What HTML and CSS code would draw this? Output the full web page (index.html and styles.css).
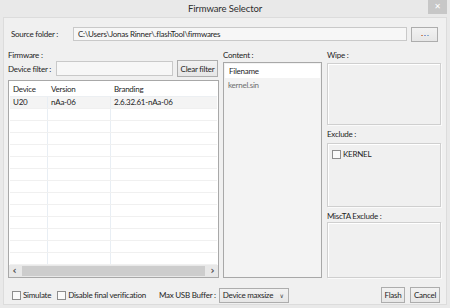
FILE: index.html
```html
<!DOCTYPE html>
<html>
<head>
<meta charset="utf-8">
<link rel="stylesheet" href="styles.css">
</head>
<body>
<div class="window">
  <div class="titlebar">
    <span></span>
    <span class="title">Firmware Selector</span>
    <span class="close">&#x2715;</span>
  </div>
  <div class="client">
    <div class="source-row">
      <span class="source-label">Source folder :</span>
      <div class="field source-field">C:\Users\Jonas Rinner\.flashTool\firmwares</div>
      <button class="btn dots"><span class="d1"></span><span class="d2"></span><span class="d3"></span></button>
    </div>
    <div class="main">
      <div class="col left">
        <div class="label">Firmware :</div>
        <div class="filter-row">
          <span class="filter-label">Device filter :</span>
          <div class="field filter-field"></div>
          <button class="btn clear">Clear filter</button>
        </div>
        <div class="table">
          <div class="thead">
            <span class="c1">Device</span><span class="c2">Version</span><span class="c3">Branding</span>
          </div>
          <div class="tbody">
            <div class="tr sel"><span class="c1">U20</span><span class="c2">nAa-06</span><span class="c3">2.6.32.61-nAa-06</span></div>
            <div class="tr"><span class="c1"></span><span class="c2"></span><span class="c3"></span></div>
            <div class="tr"><span class="c1"></span><span class="c2"></span><span class="c3"></span></div>
            <div class="tr"><span class="c1"></span><span class="c2"></span><span class="c3"></span></div>
            <div class="tr"><span class="c1"></span><span class="c2"></span><span class="c3"></span></div>
            <div class="tr"><span class="c1"></span><span class="c2"></span><span class="c3"></span></div>
            <div class="tr"><span class="c1"></span><span class="c2"></span><span class="c3"></span></div>
            <div class="tr"><span class="c1"></span><span class="c2"></span><span class="c3"></span></div>
            <div class="tr"><span class="c1"></span><span class="c2"></span><span class="c3"></span></div>
            <div class="tr"><span class="c1"></span><span class="c2"></span><span class="c3"></span></div>
            <div class="tr"><span class="c1"></span><span class="c2"></span><span class="c3"></span></div>
            <div class="tr"><span class="c1"></span><span class="c2"></span><span class="c3"></span></div>
            <div class="tr"><span class="c1"></span><span class="c2"></span><span class="c3"></span></div>
            <div class="tr"><span class="c1"></span><span class="c2"></span><span class="c3"></span></div>
          </div>
          <div class="hscroll">
            <span class="arrow">&#x2039;</span>
            <span class="thumb"></span>
            <span class="arrow">&#x203A;</span>
          </div>
        </div>
      </div>
      <div class="col middle">
        <div class="label">Content :</div>
        <div class="list">
          <div class="list-head">Filename</div>
          <div class="list-item">kernel.sin</div>
        </div>
      </div>
      <div class="col right">
        <div class="label">Wipe :</div>
        <div class="box wipe"></div>
        <div class="label">Exclude :</div>
        <div class="box exclude">
          <div class="check-item"><span class="checkbox"></span>KERNEL</div>
        </div>
        <div class="label">MiscTA Exclude :</div>
        <div class="box misc"></div>
      </div>
    </div>
    <div class="bottom">
      <div class="check-item simulate"><span class="checkbox"></span>Simulate</div>
      <div class="check-item disable"><span class="checkbox"></span>Disable final verification</div>
      <span class="usb-label">Max USB Buffer :</span>
      <div class="select"><span>Device maxsize</span><span class="chev">&#x2228;</span></div>
      <span class="spacer"></span>
      <button class="btn flash">Flash</button>
      <button class="btn cancel">Cancel</button>
    </div>
  </div>
</div>
</body>
</html>
```

FILE: styles.css
```css
* { box-sizing: border-box; }
html, body { margin: 0; padding: 0; }
body {
  width: 450px;
  height: 308px;
  overflow: hidden;
  font-family: Lato, "Liberation Sans", sans-serif;
  font-size: 8px;
  letter-spacing: -0.25px;
  white-space: nowrap;
  color: #1e1e1e;
  background: #e9e9e9;
}
.window {
  width: 450px;
  height: 308px;
  display: flex;
  flex-direction: column;
}
.titlebar {
  height: 17px;
  display: grid;
  grid-template-columns: 1fr auto 1fr;
  align-items: start;
}
.title {
  font-size: 9.5px;
  letter-spacing: -0.1px;
  color: #2e2e2e;
  line-height: 17px;
}
.close {
  justify-self: end;
  margin-right: 3px;
  width: 19px;
  height: 14px;
  background: #c7c7c7;
  color: #fff;
  font-size: 8px;
  line-height: 14px;
  text-align: center;
  letter-spacing: 0;
  font-family: "DejaVu Sans", sans-serif;
}
.client {
  flex: 1;
  margin: 0 3px 3px;
  border: 1px solid #dcdcdc;
  background: #f0f0f0;
  padding: 9px 4px 1px 4px;
  display: flex;
  flex-direction: column;
}
.source-row {
  height: 15px;
  display: flex;
  align-items: flex-start;
}
.source-label {
  width: 65px;
  padding-left: 3px;
  line-height: 14px;
}
.field {
  background: #f7f7f7;
  border: 1px solid #c9c9c9;
  height: 14px;
  line-height: 12px;
  padding-left: 4px;
}
.source-field { flex: 1; }
.btn {
  font-family: inherit;
  font-size: inherit;
  letter-spacing: inherit;
  color: #1e1e1e;
  background: linear-gradient(#f2f2f2, #e6e6e6);
  border: 1px solid #adadad;
  padding: 0;
  margin: 0;
}
.dots {
  width: 27px;
  height: 15px;
  margin-left: 4px;
  margin-right: 4px;
  display: flex;
  justify-content: center;
  align-items: center;
  padding-top: 2px;
}
.dots span { width: 2px; height: 1px; margin: 0 0.5px; }
.d1 { background: #d08a60; }
.d2 { background: #8a9ad0; }
.d3 { background: #8ab0d0; }
.main {
  margin-top: 8px;
  height: 227px;
  display: grid;
  grid-template-columns: 211px 99px 115px;
  column-gap: 4px;
}
.main .right { margin-left: 1px; }
.col { display: flex; flex-direction: column; }
.label { height: 10px; line-height: 10px; }
.filter-row {
  height: 17px;
  display: flex;
  align-items: center;
}
.filter-label { width: 48px; }
.filter-field { width: 117px; height: 15px; }
.clear {
  width: 41px;
  height: 17px;
  margin-left: 4px;
}
.table {
  margin-top: 3px;
  flex: 1;
  border: 1px solid #a8a8a8;
  background: #fff;
  display: flex;
  flex-direction: column;
  padding: 1px;
}
.thead, .tr {
  display: grid;
  grid-template-columns: 38px 63px 1fr;
}
.thead {
  height: 15px;
  line-height: 15px;
  border-bottom: 1px solid #eceff2;
}
.thead span { padding-left: 3px; }
.tbody { flex: 1; overflow: hidden; }
.tr {
  height: 12px;
  line-height: 11px;
  border-bottom: 1px solid #f0f0f0;
}
.tr span { padding-left: 3px; border-right: 1px solid #e8eef4; }
.tr span.c3 { border-right: none; }
.tr.sel { background: #f4f4f4; }
.hscroll {
  height: 12px;
  display: flex;
  align-items: center;
  background: #e8e8e8;
  margin: 0 -1px -1px;
}
.arrow {
  width: 11px;
  text-align: center;
  font-size: 10px;
  line-height: 10px;
  color: #505050;
  font-family: "DejaVu Sans", sans-serif;
  font-weight: bold;
}
.thumb {
  flex: 1;
  height: 10px;
  background: #cdcdcd;
  margin: 0 2px;
}
.list {
  margin-top: 2px;
  flex: 1;
  border: 1px solid #a8a8a8;
  background: #f3f3f3;
  padding: 1px;
}
.list-head {
  height: 14px;
  line-height: 14px;
  background: #fff;
  padding-left: 4px;
}
.list-item {
  padding-left: 3px;
  line-height: 10px;
  margin-top: 2px;
  color: #6e6e6e;
}
.box {
  border: 1px solid #cfcfcf;
  box-shadow: inset 1px 1px 0 #fff, 1px 1px 0 #fafafa;
  background: #f0f0f0;
}
.wipe { margin-top: 3px; height: 62px; margin-bottom: 4px; }
.exclude { margin-top: 4px; height: 64px; margin-bottom: 4px; padding: 5px 0 0 4px; }
.misc { margin-top: 1px; flex: 1; }
.check-item {
  display: flex;
  align-items: center;
}
.checkbox {
  width: 9px;
  height: 9px;
  border: 1px solid #8e8e8e;
  background: #fbfbfb;
  margin-right: 2px;
}
.bottom {
  margin-top: 10px;
  height: 16px;
  display: flex;
  align-items: center;
}
.simulate { margin-left: 4px; }
.disable { margin-left: 6px; }
.usb-label { margin-left: 13px; }
.select {
  margin-left: 3px;
  width: 70px;
  height: 15px;
  border: 1px solid #adadad;
  background: linear-gradient(#f2f2f2, #e6e6e6);
  display: flex;
  align-items: center;
  justify-content: space-between;
  padding: 0 4px 0 3px;
}
.chev { font-size: 6px; color: #444; font-family: "DejaVu Sans", sans-serif; }
.spacer { flex: 1; }
.flash { width: 24px; height: 16px; }
.cancel { width: 30px; height: 16px; margin-left: 5px; margin-right: 2px; }
```
